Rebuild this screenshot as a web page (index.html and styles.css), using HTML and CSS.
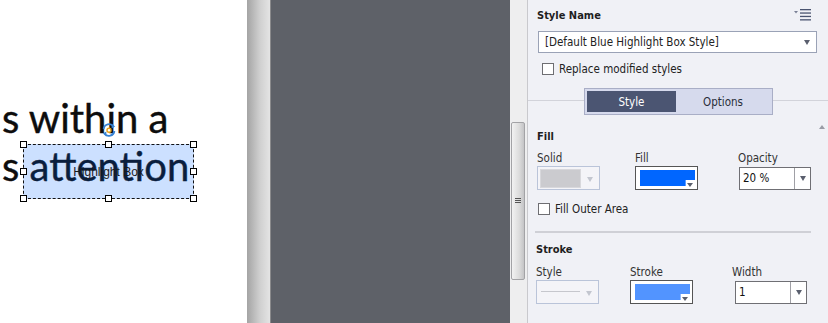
FILE: index.html
```html
<!DOCTYPE html>
<html lang="en">
<head>
  <meta charset="UTF-8" />
  <title>Highlight Box Properties</title>
  <link rel="stylesheet" href="styles.css">
</head>
<body>
  <div class="app">
    <div class="slide">
      <p class="slide-text">s within a<br>s attention</p>

      <div class="hbox">
        <span class="hbox-label">Highlight Box</span>
        <i class="handle h-tl"></i><i class="handle h-tc"></i><i class="handle h-tr"></i>
        <i class="handle h-ml"></i><i class="handle h-mr"></i>
        <i class="handle h-bl"></i><i class="handle h-bc"></i><i class="handle h-br"></i>
      </div>

      <svg class="rotate" width="16" height="16" viewBox="0 0 16 16">
        <path d="M2.6 7 A5.6 5.6 0 0 1 12.6 4.4" fill="none" stroke="#3682d4" stroke-width="1.8"/>
        <path d="M10.6 2.2 L14.2 4.6 L10.6 6.6 Z" fill="#3682d4"/>
        <path d="M13.4 9 A5.6 5.6 0 0 1 3.4 11.6" fill="none" stroke="#3682d4" stroke-width="1.8"/>
        <path d="M5.4 13.8 L1.8 11.4 L5.4 9.4 Z" fill="#3682d4"/>
        <circle cx="8" cy="8.3" r="2" fill="#fff" stroke="#e9a21a" stroke-width="1.4"/>
      </svg>
    </div>

    <div class="gutter"></div>
    <div class="stage"></div>

    <div class="vscroll">
      <div class="thumb"><span class="grip"></span></div>
    </div>

    <aside class="panel">
      <div class="panel-top">
        <div class="head-row">
          <span class="title">Style Name</span>
          <svg class="menu-icon" width="18" height="14" viewBox="0 0 18 14">
            <path d="M0 3 L4 3 L2 5.5 Z" fill="#7a8096"/>
            <rect x="6" y="1" width="11" height="1.3" fill="#4a5470"/>
            <rect x="6" y="4.4" width="11" height="1.3" fill="#4a5470"/>
            <rect x="6" y="7.8" width="11" height="1.3" fill="#4a5470"/>
            <rect x="6" y="11.2" width="11" height="1.3" fill="#4a5470"/>
          </svg>
        </div>

        <div class="select">
          <span>[Default Blue Highlight Box Style]</span>
          <span class="caret"></span>
        </div>

        <label class="check check-replace"><span class="box"></span>Replace modified styles</label>
      </div>

      <div class="tabs-wrap">
        <div class="tabs">
          <span class="tab active">Style</span>
          <span class="tab">Options</span>
        </div>
      </div>

      <section class="group fill">
        <span class="collapse"></span>
        <h3>Fill</h3>
        <div class="grid fill-grid">
          <span class="lbl">Solid</span>
          <span class="lbl">Fill</span>
          <span class="lbl">Opacity</span>

          <div class="picker disabled"><span class="chip gray"></span><span class="caret light"></span></div>
          <div class="picker color"><span class="chip blue"></span><span class="caret small"></span></div>
          <div class="combo"><span class="val">20 %</span><span class="combo-btn"><span class="caret"></span></span></div>
        </div>
        <label class="check check-outer"><span class="box"></span>Fill Outer Area</label>
      </section>

      <div class="rule"></div>

      <section class="group stroke">
        <h3>Stroke</h3>
        <div class="grid stroke-grid">
          <span class="lbl">Style</span>
          <span class="lbl">Stroke</span>
          <span class="lbl">Width</span>

          <div class="picker disabled"><span class="line-sample"></span><span class="caret light"></span></div>
          <div class="picker color"><span class="chip lightblue"></span><span class="caret small"></span></div>
          <div class="combo width-combo"><span class="val">1</span><span class="combo-btn"><span class="caret"></span></span></div>
        </div>
      </section>
    </aside>
  </div>
</body>
</html>
```

FILE: styles.css
```css
html, body {
  margin: 0;
  padding: 0;
  overflow: hidden;
}
body {
  width: 828px;
  height: 323px;
  font-family: "DejaVu Sans", sans-serif;
  font-stretch: condensed;
  font-size: 11px;
  color: #1e1e1e;
}
.app {
  display: flex;
  height: 323px;
}

/* slide canvas */
.slide {
  position: relative;
  width: 247px;
  flex: none;
  background: #fff;
  overflow: hidden;
}
.slide-text {
  margin: 0;
  padding: 94px 0 0 2px;
  font-family: Lato, sans-serif;
  font-size: 40px;
  line-height: 48px;
  color: #0d0d0d;
  white-space: nowrap;
  -webkit-text-stroke: 0.4px #0d0d0d;
}
.hbox {
  position: absolute;
  left: 23px;
  top: 144px;
  width: 169px;
  height: 53px;
  border: 1px dashed #111;
  background: rgba(0, 102, 255, 0.2);
  display: flex;
  align-items: center;
  justify-content: center;
}
.hbox-label {
  font-family: "Liberation Sans", sans-serif;
  font-stretch: normal;
  font-size: 12px;
  color: #1a1a1a;
}
.handle {
  position: absolute;
  width: 5px;
  height: 5px;
  border: 1px solid #000;
  background: #fff;
}
.h-tl, .h-tc, .h-tr { top: -4px; }
.h-ml, .h-mr { top: 23px; }
.h-bl, .h-bc, .h-br { bottom: -4px; }
.h-tl, .h-ml, .h-bl { left: -4px; }
.h-tc, .h-bc { left: 81px; }
.h-tr, .h-mr, .h-br { right: -4px; }
.rotate {
  position: absolute;
  left: 101px;
  top: 122px;
}

/* grey gutter and dark stage */
.gutter {
  width: 23px;
  flex: none;
  background: linear-gradient(to right, #a4a4a4, #cfcfcf 55%, #e4e4e4);
  border-right: 1px solid #8a8a8c;
}
.stage {
  flex: 1;
  background: #5e6168;
}
.vscroll {
  width: 17px;
  flex: none;
  background: #eeeeef;
  border-right: 1px solid #c9c9cd;
  position: relative;
}
.thumb {
  position: absolute;
  left: 1px;
  top: 122px;
  width: 12px;
  height: 156px;
  border: 1px solid #a3a3a6;
  border-radius: 2px;
  background: linear-gradient(to right, #f2f2f2, #dcdcdc 60%, #c4c4c6);
  display: flex;
  align-items: center;
  justify-content: center;
}
.grip {
  width: 6px;
  height: 6px;
  background: repeating-linear-gradient(to bottom, #555 0 1px, transparent 1px 2px);
}

/* properties panel */
.panel {
  width: 300px;
  flex: none;
  background: #f0f1f6;
}
.panel-top {
  padding: 7px 11px 0 9px;
}
.head-row {
  display: flex;
  justify-content: space-between;
  align-items: center;
  height: 16px;
}
.title, .group h3 {
  font-weight: bold;
  font-size: 11px;
  color: #1e1e1e;
}
.menu-icon {
  margin-right: 5px;
}
.select {
  margin: 8px 0 0 1px;
  height: 20px;
  border: 1px solid #9aa2b6;
  background: #fff;
  display: flex;
  align-items: center;
  justify-content: space-between;
  padding: 0 6px;
  font-size: 11.5px;
  color: #222;
}
.caret {
  width: 0;
  height: 0;
  border-left: 3.5px solid transparent;
  border-right: 3.5px solid transparent;
  border-top: 5px solid #5a5f6e;
}
.caret.light { border-top-color: #c3c6cf; }
.caret.small {
  border-left-width: 3px;
  border-right-width: 3px;
  border-top-width: 4px;
}
.check {
  display: flex;
  align-items: center;
  gap: 5px;
  font-size: 11.5px;
  color: #222;
}
.box {
  width: 10px;
  height: 10px;
  border: 1px solid #6e6e72;
  background: #fff;
}
.check-replace {
  margin: 9px 0 0 5px;
}
.tabs-wrap {
  margin-top: 12px;
  height: 27px;
  display: flex;
  justify-content: center;
  background: linear-gradient(to bottom, transparent 12px, #d2d3da 12px, #d2d3da 13px, transparent 13px);
}
.tabs {
  margin-left: 1px;
  width: 183px;
  padding: 2px;
  display: flex;
  border: 1px solid #a9aec6;
  background: #d6daed;
}
.tab {
  flex: 1;
  display: flex;
  align-items: center;
  justify-content: center;
  font-size: 11.5px;
  color: #2a2e3a;
}
.tab.active {
  flex: none;
  width: 89px;
  background: #4b5572;
  color: #fff;
}

.group {
  position: relative;
  padding: 0 0 0 9px;
}
.group h3 {
  margin: 0;
  line-height: 14px;
}
.fill { padding-top: 15px; }
.collapse {
  position: absolute;
  right: 3px;
  top: 10px;
  width: 0;
  height: 0;
  border-left: 3px solid transparent;
  border-right: 3px solid transparent;
  border-bottom: 4px solid #9a9ca6;
}
.grid {
  display: grid;
  grid-template-rows: 16px auto;
  row-gap: 0;
  align-items: center;
}
.fill-grid {
  margin-top: 6px;
  grid-template-columns: 98px 103px 72px;
}
.stroke-grid {
  margin-top: 7px;
  grid-template-columns: 94px 102px 72px;
}
.lbl {
  font-size: 11.5px;
  color: #333;
}
.picker {
  width: 61px;
  height: 22px;
  border: 1px solid #555;
  background: #fff;
  position: relative;
}
.picker.disabled {
  border-color: #bac4d9;
  background: #f4f4f8;
}
.picker .caret {
  position: absolute;
  right: 6px;
  top: 10px;
}
.picker.color .caret {
  right: 4px;
  top: 16px;
}
.chip {
  position: absolute;
  left: 2px;
  top: 2px;
}
.chip.gray {
  width: 39px;
  height: 17px;
  background: #cbcbcf;
  border: 1px solid #d8d8dc;
  left: 2px;
  top: 2px;
}
.chip.blue, .chip.lightblue {
  left: 4px;
  top: 3px;
  width: 55px;
  height: 16px;
  clip-path: polygon(0 0, 100% 0, 100% 62%, 83% 62%, 83% 100%, 0 100%);
}
.chip.blue { background: #0066ff; }
.chip.lightblue { background: #5294ff; }
.line-sample {
  position: absolute;
  left: 4px;
  top: 10px;
  width: 39px;
  height: 1px;
  background: #c6c7cd;
}
.combo {
  width: 70px;
  height: 21px;
  border: 1px solid #6f6f74;
  background: #fff;
  display: flex;
  margin-left: 1px;
}
.width-combo {
  margin-left: 3px;
}
.combo .val {
  flex: 1;
  padding-left: 3px;
  display: flex;
  align-items: center;
  font-size: 11.5px;
  color: #111;
}
.combo-btn {
  width: 15px;
  border-left: 1px solid #a0a0a6;
  display: flex;
  align-items: center;
  justify-content: center;
}
.check-outer {
  margin: 12px 0 0 1px;
}
.rule {
  margin: 15px 17px 0 7px;
  height: 2px;
  background: #cfd0d6;
}
.stroke { padding-top: 10px; padding-left: 8px; }
```
